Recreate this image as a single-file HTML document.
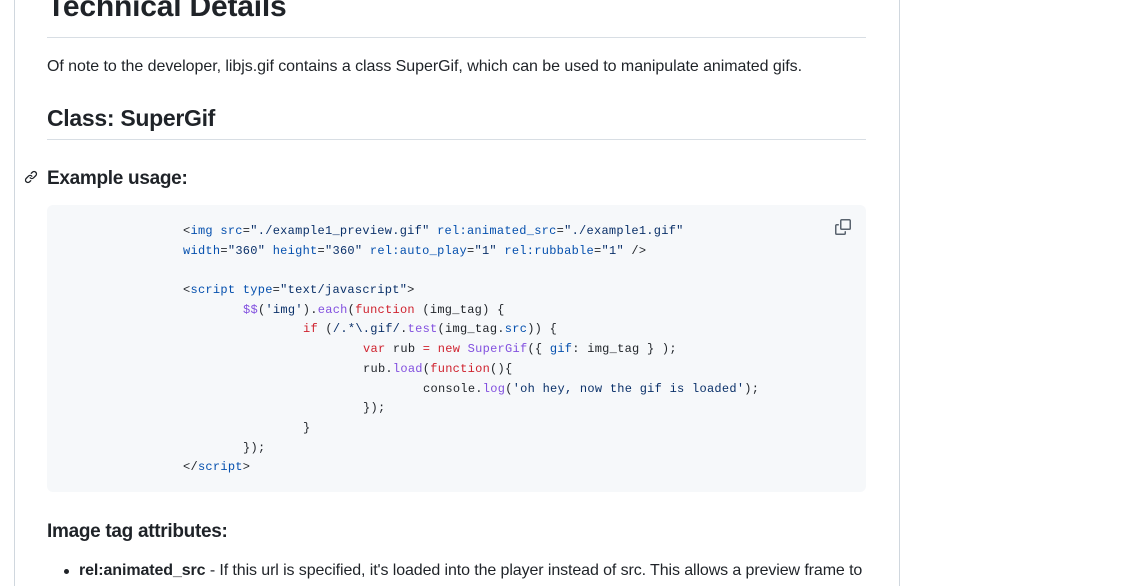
<!DOCTYPE html>
<html><head><style>
html,body{margin:0;padding:0;background:#fff;width:1143px;height:586px;overflow:hidden;position:relative;font-family:"Liberation Sans",sans-serif;color:#1f2328}
.box{position:absolute;left:14px;top:-10px;width:884px;height:620px;border-left:1px solid #d0d7de;border-right:1px solid #d0d7de}
.a{position:absolute;left:47px;white-space:nowrap}
.hr{position:absolute;left:47px;width:819px;height:1px;background:#d8dee4}
pre{position:absolute;left:47px;top:205px;width:819px;height:287px;margin:0;background:#f6f8fa;border-radius:6px}
.l{position:absolute;font-family:"Liberation Mono",monospace;font-size:12px;white-space:pre;color:#1f2328;letter-spacing:0.27px}
.t{color:#0550ae}.s{color:#0a3069}.k{color:#cf222e}.f{color:#8250df}
</style></head><body>
<div class="box"></div>
<div class="a" style="top:-10px;font-size:30px;font-weight:600;letter-spacing:-0.2px">Technical Details</div>
<div class="hr" style="top:37px"></div>
<div class="a" style="top:58px;font-size:16px;letter-spacing:-0.05px">Of note to the developer, libjs.gif contains a class SuperGif, which can be used to manipulate animated gifs.</div>
<div class="a" style="top:105px;font-size:23px;font-weight:600;letter-spacing:-0.3px">Class: SuperGif</div>
<div class="hr" style="top:139px"></div>
<svg style="position:absolute;left:24px;top:170px" width="14" height="14" viewBox="0 0 16 16"><path fill="#1f2328" d="m7.775 3.275 1.25-1.25a3.5 3.5 0 1 1 4.95 4.95l-2.5 2.5a3.5 3.5 0 0 1-4.95 0 .751.751 0 0 1 .018-1.042.751.751 0 0 1 1.042-.018 1.998 1.998 0 0 0 2.83 0l2.5-2.5a2.002 2.002 0 0 0-2.83-2.83l-1.25 1.25a.751.751 0 0 1-1.042-.018.751.751 0 0 1-.018-1.042Zm-4.69 9.64a1.998 1.998 0 0 0 2.83 0l1.25-1.25a.751.751 0 0 1 1.042.018.751.751 0 0 1 .018 1.042l-1.25 1.25a3.5 3.5 0 1 1-4.95-4.95l2.5-2.5a3.5 3.5 0 0 1 4.95 0 .751.751 0 0 1-.018 1.042.751.751 0 0 1-1.042.018 1.998 1.998 0 0 0-2.83 0l-2.5 2.5a1.998 1.998 0 0 0 0 2.83Z"/></svg>
<div class="a" style="top:168px;font-size:19px;font-weight:600;letter-spacing:-0.3px">Example usage:</div>
<pre></pre>
<svg style="position:absolute;left:835px;top:219px" width="16" height="16" viewBox="0 0 16 16"><path fill="#59636e" d="M0 6.75C0 5.784.784 5 1.75 5h1.5a.75.75 0 0 1 0 1.5h-1.5a.25.25 0 0 0-.25.25v7.5c0 .138.112.25.25.25h7.5a.25.25 0 0 0 .25-.25v-1.5a.75.75 0 0 1 1.5 0v1.5A1.75 1.75 0 0 1 9.25 16h-7.5A1.75 1.75 0 0 1 0 14.25Z"/><path fill="#59636e" d="M5 1.75C5 .784 5.784 0 6.75 0h7.5C15.216 0 16 .784 16 1.75v7.5A1.75 1.75 0 0 1 14.25 11h-7.5A1.75 1.75 0 0 1 5 9.25Zm1.75-.25a.25.25 0 0 0-.25.25v7.5c0 .138.112.25.25.25h7.5a.25.25 0 0 0 .25-.25v-7.5a.25.25 0 0 0-.25-.25Z"/></svg>
<div class="l" style="left:183px;top:224px">&lt;<span class="t">img src</span>=<span class="s">"./example1_preview.gif"</span> <span class="t">rel:animated_src</span>=<span class="s">"./example1.gif"</span></div>
<div class="l" style="left:183px;top:244px"><span class="t">width</span>=<span class="s">"360"</span> <span class="t">height</span>=<span class="s">"360"</span> <span class="t">rel:auto_play</span>=<span class="s">"1"</span> <span class="t">rel:rubbable</span>=<span class="s">"1"</span> /&gt;</div>
<div class="l" style="left:183px;top:283px">&lt;<span class="t">script type</span>=<span class="s">"text/javascript"</span>&gt;</div>
<div class="l" style="left:243px;top:303px"><span class="f">$$</span>(<span class="s">'img'</span>).<span class="f">each</span>(<span class="k">function</span> (img_tag) {</div>
<div class="l" style="left:303px;top:322px"><span class="k">if</span> (<span class="s">/.*\.gif/</span>.<span class="f">test</span>(img_tag.<span class="t">src</span>)) {</div>
<div class="l" style="left:363px;top:342px"><span class="k">var</span> rub <span class="k">=</span> <span class="k">new</span> <span class="f">SuperGif</span>({ <span class="t">gif</span>: img_tag } );</div>
<div class="l" style="left:363px;top:362px">rub.<span class="f">load</span>(<span class="k">function</span>(){</div>
<div class="l" style="left:423px;top:382px">console.<span class="f">log</span>(<span class="s">'oh hey, now the gif is loaded'</span>);</div>
<div class="l" style="left:363px;top:401px">});</div>
<div class="l" style="left:303px;top:421px">}</div>
<div class="l" style="left:243px;top:441px">});</div>
<div class="l" style="left:183px;top:460px">&lt;/<span class="t">script</span>&gt;</div>
<div class="a" style="top:521px;font-size:19px;font-weight:600;letter-spacing:-0.3px">Image tag attributes:</div>
<div style="position:absolute;left:64px;top:569px;width:5px;height:5px;border-radius:50%;background:#1f2328"></div>
<div class="a" style="left:79px;top:562px;font-size:16px;letter-spacing:-0.1px"><b>rel:animated_src</b> - If this url is specified, it's loaded into the player instead of src. This allows a preview frame to</div>
</body></html>
